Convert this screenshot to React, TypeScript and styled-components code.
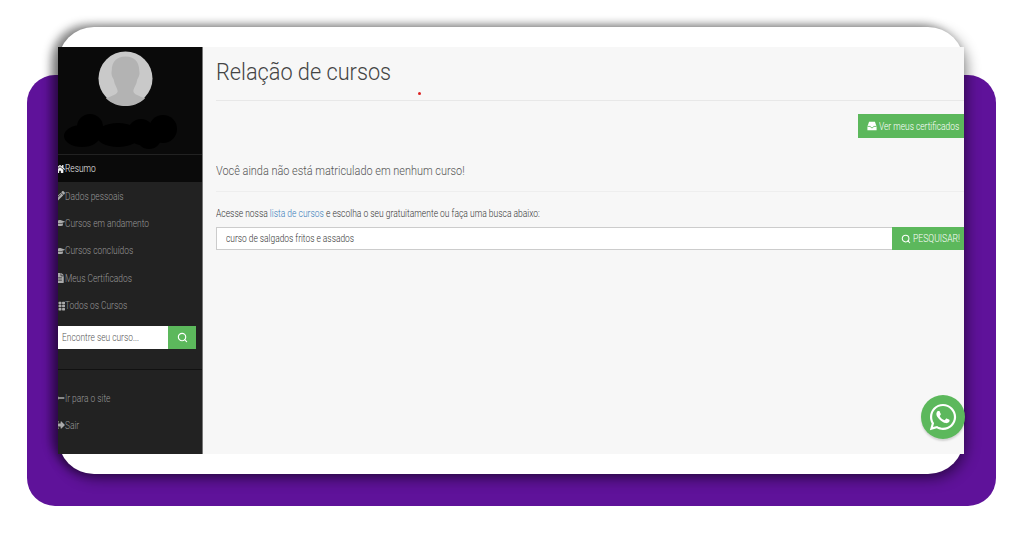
import React from 'react';
import styled, { createGlobalStyle } from 'styled-components';
import { Search } from 'lucide-react';
import {
  FaFileAlt,
  FaGraduationCap,
  FaHome,
  FaLongArrowAltLeft,
  FaPencilAlt,
  FaSignOutAlt,
  FaTh,
  FaWhatsapp,
} from 'react-icons/fa';

const GlobalStyle = createGlobalStyle`
  html, body {
    margin: 0;
    padding: 0;
    background: #fff;
    font-family: Roboto, "Liberation Sans", sans-serif;
    font-weight: 300;
  }
`;

const Page = styled.div`
  width: 1024px;
  height: 536px;
  padding: 75px 28px 30px 27px;
  box-sizing: border-box;
  overflow: hidden;
`;

const Panel = styled.div`
  height: 431px;
  padding: 0 32px 0 31px;
  background: #5f129a;
  border-radius: 28px;
`;

const Card = styled.div`
  position: relative;
  top: -48px;
  height: 447px;
  padding: 20px 0;
  box-sizing: border-box;
  background: #fff;
  border-radius: 36px;
  box-shadow: -7px -2px 10px rgba(0, 0, 0, 0.45), 3px 5px 14px rgba(0, 0, 0, 0.45);
`;

const Shell = styled.div`
  display: grid;
  grid-template-columns: 145px 1fr;
  height: 407px;
`;

// the screenshot was squeezed sideways, so the text is narrower than the font
const Squeezed = styled.span<{ $scale: number }>`
  display: inline-block;
  white-space: nowrap;
  transform: scaleX(${({ $scale }) => $scale});
  transform-origin: left center;
`;

const Sidebar = styled.aside`
  display: flex;
  flex-direction: column;
  background: #222;
  border-right: 1px solid #777;
  overflow: hidden;
`;

const Profile = styled.div`
  height: 108px;
  padding-top: 4px;
  box-sizing: border-box;
  background: #0a0a0a;
  border-bottom: 1px solid #222;
`;

const AvatarSvg = styled.svg`
  display: block;
  margin-left: 40px;
`;

const ScribbleSvg = styled.svg`
  display: block;
  margin: 6px 0 0 5px;
`;

const NavItem = styled.a<{ $active?: boolean }>`
  display: flex;
  align-items: center;
  height: 27.4px;
  font-size: 10.5px;
  color: ${({ $active }) => ($active ? '#f0f0f0' : '#999')};
  background: ${({ $active }) => ($active ? '#0a0a0a' : 'transparent')};

  svg {
    width: 10px;
    height: 10px;
    margin-left: -3px;
    flex: none;
    color: ${({ $active }) => ($active ? '#f0f0f0' : '#aaa')};
  }
`;

const SideSearch = styled.div`
  display: flex;
  width: 138px;
  height: 23px;
  margin-top: 7px;
`;

const SideInput = styled.div`
  flex: 1;
  padding-left: 4px;
  background: #fff;
  font-size: 10.5px;
  line-height: 23px;
  color: #555;
`;

const SideButton = styled.div`
  display: flex;
  align-items: center;
  justify-content: center;
  width: 28px;
  background: #5cb85c;
  color: #fff;

  svg {
    width: 11px;
    height: 11px;
  }
`;

const SideDivider = styled.hr`
  width: 100%;
  margin: 20px 0 14px;
  border: 0;
  border-top: 1px solid #111;
`;

const Content = styled.main`
  position: relative;
  display: flex;
  flex-direction: column;
  padding-left: 13px;
  background: #f7f7f7;
  color: #555;
  overflow: hidden;
`;

const Title = styled.h1`
  margin: 0;
  height: 53px;
  font-size: 24px;
  font-weight: 300;
  line-height: 50px;
  color: #444;
  border-bottom: 1px solid #e8e8e8;
`;

const RedDot = styled.span`
  position: absolute;
  left: 215px;
  top: 45px;
  width: 3px;
  height: 3px;
  border-radius: 50%;
  background: #d22;
`;

const Actions = styled.div`
  display: flex;
  justify-content: flex-end;
  margin-top: 13px;
`;

const GreenButton = styled.a`
  display: flex;
  align-items: center;
  gap: 2px;
  padding-left: 9px;
  box-sizing: border-box;
  overflow: hidden;
  background: #5cb85c;
  color: #fff;
  font-size: 10.5px;

  svg {
    width: 10px;
    height: 10px;
    flex: none;
  }
`;

const CertButton = styled(GreenButton)`
  width: 106px;
  height: 24px;
`;

const Message = styled.p`
  margin: 22px 0 0;
  height: 31px;
  font-size: 12px;
  line-height: 23px;
  border-bottom: 1px solid #eee;
`;

const Hint = styled.p`
  margin: 15px 0 0;
  font-size: 10px;
  line-height: 13px;
  color: #333;

  a {
    color: #337ab7;
  }
`;

const SearchRow = styled.div`
  display: flex;
  height: 23px;
  margin-top: 7px;
`;

const SearchInput = styled.div`
  flex: 1;
  padding-left: 9px;
  background: #fff;
  border: 1px solid #ccc;
  border-right: 0;
  font-size: 10.5px;
  line-height: 21px;
  color: #333;
`;

const SearchButton = styled(GreenButton)`
  width: 72px;
`;

const WhatsappBubble = styled.div`
  position: absolute;
  right: -1px;
  bottom: 35px;
  display: flex;
  align-items: center;
  justify-content: center;
  width: 44px;
  height: 44px;
  border-radius: 50%;
  background: #5cb85c;
  color: #fff;
  font-size: 30px;
  box-shadow: 0 2px 2px rgba(0, 0, 0, 0.15);
`;

function Avatar() {
  return (
    <AvatarSvg width="55" height="55" viewBox="0 0 56 56">
      <circle cx="28" cy="28" r="27.5" fill="#c9c9c9" />
      <path
        d="M28 5.5C19 5.5 14 11 14 20c-1 4 1 7 2 9 1 6 4 9 4 12 0 3-6 5-12 7 6 6 14 8 20 8s14-2 20-8c-6-2-12-4-12-7 0-3 3-6 4-12 1-2 3-5 2-9 0-9-5-14.500-14-14.500z"
        fill="#b3b3b3"
      />
    </AvatarSvg>
  );
}

// the name is scribbled over in the screenshot
function NameScribble() {
  return (
    <ScribbleSvg width="116" height="38" viewBox="0 0 116 38">
      <g fill="#000">
        <ellipse cx="19" cy="24" rx="18" ry="11" />
        <circle cx="27" cy="15" r="13" />
        <ellipse cx="55" cy="23" rx="22" ry="12" />
        <circle cx="78" cy="20" r="13" />
        <ellipse cx="86" cy="26" rx="12" ry="11" />
        <circle cx="100" cy="17" r="14" />
      </g>
    </ScribbleSvg>
  );
}

function InboxIcon() {
  return (
    <svg viewBox="0 0 12 12">
      <path d="M2.500 1h7l2 5.500V11H.5V6.500z" fill="#fff" />
      <path d="M.5 6.500H4l1 1.500h2l1-1.500h3.500" fill="none" stroke="#5cb85c" />
    </svg>
  );
}

const navItems = [
  { icon: <FaHome />, label: 'Resumo', active: true },
  { icon: <FaPencilAlt />, label: 'Dados pessoais' },
  { icon: <FaGraduationCap />, label: 'Cursos em andamento' },
  { icon: <FaGraduationCap />, label: 'Cursos concluídos' },
  { icon: <FaFileAlt />, label: 'Meus Certificados' },
  { icon: <FaTh />, label: 'Todos os Cursos' },
];

export default function App() {
  return (
    <Page>
      <GlobalStyle />
      <Panel>
        <Card>
          <Shell>
            <Sidebar>
              <Profile>
                <Avatar />
                <NameScribble />
              </Profile>
              {navItems.map((item) => (
                <NavItem key={item.label} $active={item.active}>
                  {item.icon}
                  <Squeezed $scale={0.8}>{item.label}</Squeezed>
                </NavItem>
              ))}
              <SideSearch>
                <SideInput>
                  <Squeezed $scale={0.8}>Encontre seu curso...</Squeezed>
                </SideInput>
                <SideButton>
                  <Search strokeWidth={2.5} />
                </SideButton>
              </SideSearch>
              <SideDivider />
              <NavItem>
                <FaLongArrowAltLeft />
                <Squeezed $scale={0.8}>Ir para o site</Squeezed>
              </NavItem>
              <NavItem>
                <FaSignOutAlt />
                <Squeezed $scale={0.8}>Sair</Squeezed>
              </NavItem>
            </Sidebar>
            <Content>
              <Title>
                <Squeezed $scale={0.905}>Relação de cursos</Squeezed>
              </Title>
              <RedDot />
              <Actions>
                <CertButton>
                  <InboxIcon />
                  <Squeezed $scale={0.8}>Ver meus certificados</Squeezed>
                </CertButton>
              </Actions>
              <Message>
                <Squeezed $scale={0.91}>Você ainda não está matriculado em nenhum curso!</Squeezed>
              </Message>
              <Hint>
                <Squeezed $scale={0.85}>
                  Acesse nossa <a>lista de cursos</a> e escolha o seu gratuitamente ou faça uma busca abaixo:
                </Squeezed>
              </Hint>
              <SearchRow>
                <SearchInput>
                  <Squeezed $scale={0.8}>curso de salgados fritos e assados</Squeezed>
                </SearchInput>
                <SearchButton>
                  <Search strokeWidth={2.5} />
                  <Squeezed $scale={0.82}>PESQUISAR!</Squeezed>
                </SearchButton>
              </SearchRow>
            </Content>
          </Shell>
          <WhatsappBubble>
            <FaWhatsapp />
          </WhatsappBubble>
        </Card>
      </Panel>
    </Page>
  );
}
